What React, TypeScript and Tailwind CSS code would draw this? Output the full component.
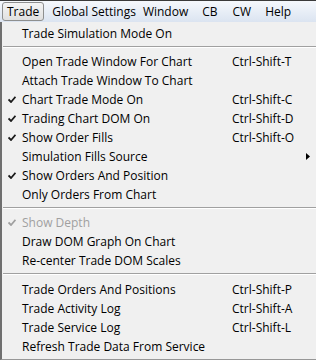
import React from "react";

type Item =
  | { kind: "sep" }
  | {
      kind?: "item";
      label: string;
      shortcut?: string;
      checked?: boolean;
      disabled?: boolean;
      submenu?: boolean;
    };

const items: Item[] = [
  { label: "Trade Simulation Mode On" },
  { kind: "sep" },
  { label: "Open Trade Window For Chart", shortcut: "Ctrl-Shift-T" },
  { label: "Attach Trade Window To Chart" },
  { label: "Chart Trade Mode On", shortcut: "Ctrl-Shift-C", checked: true },
  { label: "Trading Chart DOM On", shortcut: "Ctrl-Shift-D", checked: true },
  { label: "Show Order Fills", shortcut: "Ctrl-Shift-O", checked: true },
  { label: "Simulation Fills Source", submenu: true },
  { label: "Show Orders And Position", checked: true },
  { label: "Only Orders From Chart" },
  { kind: "sep" },
  { label: "Show Depth", checked: true, disabled: true },
  { label: "Draw DOM Graph On Chart" },
  { label: "Re-center Trade DOM Scales" },
  { kind: "sep" },
  { label: "Trade Orders And Positions", shortcut: "Ctrl-Shift-P" },
  { label: "Trade Activity Log", shortcut: "Ctrl-Shift-A" },
  { label: "Trade Service Log", shortcut: "Ctrl-Shift-L" },
  { label: "Refresh Trade Data From Service" },
];

const Check = ({ dim }: { dim?: boolean }) => (
  <svg width="8" height="7" viewBox="0 0 8 7" className="block">
    <path
      d="M0.5 3.5 L3 6 L7.5 0.8"
      fill="none"
      stroke={dim ? "#a0a0a0" : "#1a1a1a"}
      strokeWidth="1.8"
    />
  </svg>
);

export default function App() {
  return (
    <div
      className="w-[316px] h-[360px] overflow-hidden bg-[#f0f0f0] text-[12px] text-black"
      style={{ fontFamily: '"Segoe UI", "Open Sans", "Noto Sans", sans-serif' }}
    >
      {/* Menu bar */}
      <div className="h-[22px] flex items-center border-t border-[#3a3a3a] bg-gradient-to-b from-[#f5f8fc] to-[#dbe4f1]">
        <div className="ml-[2px] h-[19px] px-[4px] flex items-center rounded-[3px] border border-[#8e8f8f] bg-gradient-to-b from-[#f4f4f4] to-[#e0e0e0] leading-none">
          Trade
        </div>
        <div className="flex items-center leading-none">
          <span className="ml-[8px]">Global Settings</span>
          <span className="ml-[7px]">Window</span>
          <span className="ml-[14px]">CB</span>
          <span className="ml-[15px]">CW</span>
          <span className="ml-[14px]">Help</span>
        </div>
      </div>

      {/* Dropdown */}
      <div className="h-[338px] border-l-2 border-b border-[#979797] border-l-[#6f6f6f] pt-[2px]">
        {items.map((it, i) =>
          it.kind === "sep" ? (
            <div key={i} className={`${i === 14 ? "h-[10px]" : "h-[9px]"} pt-[3px] pl-[1px]`}>
              <div className="h-px bg-[#a0a0a0]" />
              <div className="h-px bg-white" />
            </div>
          ) : (
            <div key={i} className="h-[19px] flex items-center leading-none">
              <div className="w-[20px] pl-[6px] flex items-center">
                {it.checked && <Check dim={it.disabled} />}
              </div>
              <div className={`w-[210px] whitespace-nowrap ${it.disabled ? "text-[#a0a0a0]" : ""}`}>
                {it.label}
              </div>
              <div className="flex-1 whitespace-nowrap">{it.shortcut}</div>
              {it.submenu && (
                <svg width="4" height="7" viewBox="0 0 4 7" className="mr-[6px]">
                  <path d="M0 0 L4 3.5 L0 7 Z" fill="#000" />
                </svg>
              )}
            </div>
          ),
        )}
      </div>
    </div>
  );
}
